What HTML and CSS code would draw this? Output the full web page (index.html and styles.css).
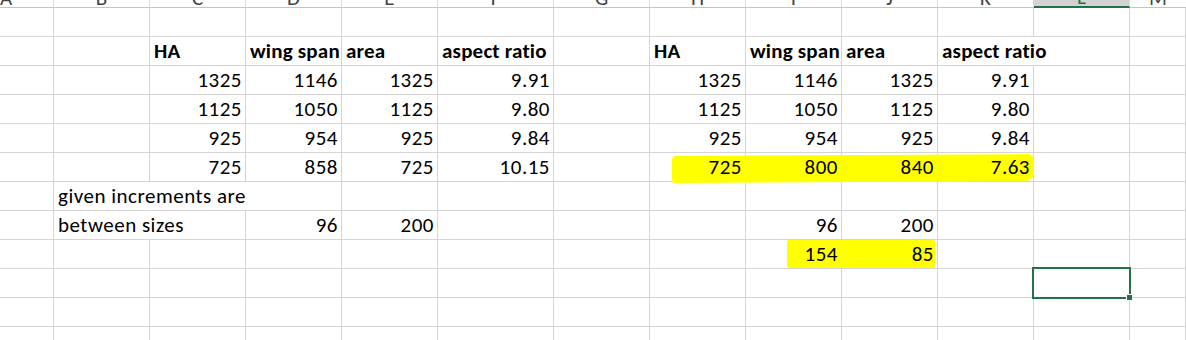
FILE: index.html
```html
<!DOCTYPE html>
<html>
<head>
<meta charset="utf-8">
<link rel="stylesheet" href="styles.css">
</head>
<body>
<div class="sheet">
  <div class="h h-first"><span>A</span></div>
  <div class="h"><span>B</span></div>
  <div class="h"><span>C</span></div>
  <div class="h"><span>D</span></div>
  <div class="h"><span>E</span></div>
  <div class="h"><span>F</span></div>
  <div class="h"><span>G</span></div>
  <div class="h"><span>H</span></div>
  <div class="h"><span>I</span></div>
  <div class="h"><span>J</span></div>
  <div class="h"><span>K</span></div>
  <div class="h h-sel"><span>L</span></div>
  <div class="h h-last"><span>M</span></div>

  <!-- row 1 -->
  <div class="c"></div><div class="c"></div><div class="c"></div><div class="c"></div><div class="c"></div><div class="c"></div><div class="c"></div><div class="c"></div><div class="c"></div><div class="c"></div><div class="c"></div><div class="c"></div><div class="c"></div>

  <!-- row 2 headers -->
  <div class="c"></div><div class="c"></div>
  <div class="c b"><span>HA</span></div>
  <div class="c b"><span>wing span</span></div>
  <div class="c b"><span>area</span></div>
  <div class="c b"><span>aspect ratio</span></div>
  <div class="c"></div>
  <div class="c b"><span>HA</span></div>
  <div class="c b"><span>wing span</span></div>
  <div class="c b"><span>area</span></div>
  <div class="c b spill"><span>aspect ratio</span></div>
  <div class="c"></div><div class="c"></div>

  <!-- row 3 -->
  <div class="c"></div><div class="c"></div>
  <div class="c n"><span>1325</span></div>
  <div class="c n"><span>1146</span></div>
  <div class="c n"><span>1325</span></div>
  <div class="c n"><span>9.91</span></div>
  <div class="c"></div>
  <div class="c n"><span>1325</span></div>
  <div class="c n"><span>1146</span></div>
  <div class="c n"><span>1325</span></div>
  <div class="c n"><span>9.91</span></div>
  <div class="c"></div><div class="c"></div>

  <!-- row 4 -->
  <div class="c"></div><div class="c"></div>
  <div class="c n"><span>1125</span></div>
  <div class="c n"><span>1050</span></div>
  <div class="c n"><span>1125</span></div>
  <div class="c n"><span>9.80</span></div>
  <div class="c"></div>
  <div class="c n"><span>1125</span></div>
  <div class="c n"><span>1050</span></div>
  <div class="c n"><span>1125</span></div>
  <div class="c n"><span>9.80</span></div>
  <div class="c"></div><div class="c"></div>

  <!-- row 5 -->
  <div class="c"></div><div class="c"></div>
  <div class="c n"><span>925</span></div>
  <div class="c n"><span>954</span></div>
  <div class="c n"><span>925</span></div>
  <div class="c n"><span>9.84</span></div>
  <div class="c"></div>
  <div class="c n"><span>925</span></div>
  <div class="c n"><span>954</span></div>
  <div class="c n"><span>925</span></div>
  <div class="c n"><span>9.84</span></div>
  <div class="c"></div><div class="c"></div>

  <!-- row 6 -->
  <div class="c"></div><div class="c"></div>
  <div class="c n"><span>725</span></div>
  <div class="c n"><span>858</span></div>
  <div class="c n"><span>725</span></div>
  <div class="c n"><span>10.15</span></div>
  <div class="c"></div>
  <div class="c n"><span>725</span></div>
  <div class="c n"><span>800</span></div>
  <div class="c n"><span>840</span></div>
  <div class="c n"><span>7.63</span></div>
  <div class="c"></div><div class="c"></div>

  <!-- row 7 -->
  <div class="c"></div>
  <div class="c spill"><span>given increments are</span></div>
  <div class="c spill"></div>
  <div class="c"></div><div class="c"></div><div class="c"></div><div class="c"></div><div class="c"></div><div class="c"></div><div class="c"></div><div class="c"></div><div class="c"></div><div class="c"></div>

  <!-- row 8 -->
  <div class="c"></div>
  <div class="c spill"><span>between sizes</span></div>
  <div class="c"></div>
  <div class="c n"><span>96</span></div>
  <div class="c n"><span>200</span></div>
  <div class="c"></div><div class="c"></div><div class="c"></div>
  <div class="c n"><span>96</span></div>
  <div class="c n"><span>200</span></div>
  <div class="c"></div><div class="c"></div><div class="c"></div>

  <!-- row 9 -->
  <div class="c"></div><div class="c"></div><div class="c"></div><div class="c"></div><div class="c"></div><div class="c"></div><div class="c"></div><div class="c"></div>
  <div class="c n"><span>154</span></div>
  <div class="c n"><span>85</span></div>
  <div class="c"></div><div class="c"></div><div class="c"></div>

  <!-- row 10 -->
  <div class="c"></div><div class="c"></div><div class="c"></div><div class="c"></div><div class="c"></div><div class="c"></div><div class="c"></div><div class="c"></div><div class="c"></div><div class="c"></div><div class="c"></div>
  <div class="c active"><i class="sel"></i><i class="handle"></i></div>
  <div class="c"></div>

  <!-- row 11 -->
  <div class="c"></div><div class="c"></div><div class="c"></div><div class="c"></div><div class="c"></div><div class="c"></div><div class="c"></div><div class="c"></div><div class="c"></div><div class="c"></div><div class="c"></div><div class="c"></div><div class="c"></div>

  <!-- row 12 -->
  <div class="c"></div><div class="c"></div><div class="c"></div><div class="c"></div><div class="c"></div><div class="c"></div><div class="c"></div><div class="c"></div><div class="c"></div><div class="c"></div><div class="c"></div><div class="c"></div><div class="c"></div>

  <div class="mark mark-1"></div>
  <div class="mark mark-2"></div>
</div>
</body>
</html>
```

FILE: styles.css
```css
html, body {
  margin: 0;
  padding: 0;
  background: #ffffff;
  overflow: hidden;
}

body {
  font-family: Calibri, Carlito, Lato, "Noto Sans", sans-serif;
  color: #000;
}

.sheet {
  position: relative;
  display: grid;
  grid-template-columns: 54px 96px 96px 96px 96px 116px 96px 96px 96px 96px 96px 96px 56px;
  grid-template-rows: 8px repeat(12, 29px);
  width: 1186px;
  height: 340px;
  overflow: hidden;
}

.h {
  box-sizing: border-box;
  border-right: 1px solid #dcdcdc;
  border-bottom: 1px solid #c4c4c4;
  display: flex;
  justify-content: center;
  align-items: flex-end;
  overflow: hidden;
  font-size: 21px;
  line-height: 20px;
  color: #444;
  background: #ffffff;
}

.h span {
  margin-bottom: -1px;
}

.h-first {
  justify-content: flex-start;
}

.h-sel {
  background: #d2d2d2;
  border-bottom: 2px solid #217346;
  color: #217346;
}

.h-last {
  border-right: none;
}

.c {
  box-sizing: border-box;
  min-width: 0;
  border-right: 1px solid #d4d4d4;
  border-bottom: 1px solid #d4d4d4;
  display: flex;
  align-items: flex-end;
  padding: 0 4px 2px 4px;
  font-size: 21px;
  line-height: 24px;
  letter-spacing: 0.5px;
  white-space: nowrap;
}

.c span {
  position: relative;
  z-index: 2;
}

.n {
  justify-content: flex-end;
  padding-right: 3px;
}

.b {
  font-weight: bold;
  letter-spacing: 0.2px;
}

.spill {
  border-right-color: transparent;
}

.active {
  position: relative;
}

.sel {
  position: absolute;
  left: -2px;
  top: -2px;
  right: -2px;
  bottom: -2px;
  border: 2px solid #217346;
  z-index: 3;
}

.handle {
  position: absolute;
  right: -4px;
  bottom: -4px;
  width: 5px;
  height: 5px;
  background: #217346;
  border: 1px solid #ffffff;
  z-index: 4;
}

.mark {
  position: absolute;
  background: #ffff00;
  z-index: 1;
}

.mark-1 {
  left: 672px;
  top: 155px;
  width: 362px;
  height: 27px;
  border-radius: 4px 6px 8px 3px;
  transform: rotate(-0.3deg);
}

.mark-2 {
  left: 787px;
  top: 240px;
  width: 148px;
  height: 28px;
  border-radius: 2px;
}
```
